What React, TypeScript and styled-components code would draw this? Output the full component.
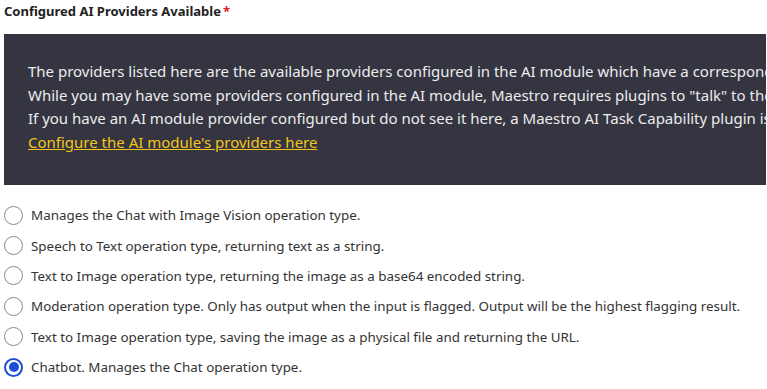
import React from "react";
import styled, { createGlobalStyle } from "styled-components";

const Global = createGlobalStyle`
  html, body { margin: 0; padding: 0; background: #fff; }
  body { font-family: "Noto Sans", "Open Sans", sans-serif; overflow: hidden; }
`;

const Page = styled.div`
  width: 767px;
  height: 389px;
  overflow: hidden;
  padding: 0 1px 0 4px;
  box-sizing: border-box;
`;

const Label = styled.div`
  font-size: 13px;
  font-weight: 700;
  color: #222;
  line-height: 20px;
  padding-top: 1px;
  height: 33px;
`;

const Req = styled.span`
  color: #e0201e;
  margin-left: 2px;
`;

const InfoBox = styled.div`
  background: #353541;
  color: #ececec;
  height: 151px;
  box-sizing: border-box;
  padding: 26px 0 0 24px;
  font-size: 15px;
  line-height: 23.7px;
  white-space: nowrap;
  overflow: hidden;
`;

const Link = styled.a`
  color: #f3c51b;
  text-decoration: underline;
`;

const Options = styled.div`
  display: flex;
  flex-direction: column;
  padding-top: 15px;
`;

const Option = styled.label`
  display: flex;
  align-items: center;
  gap: 8px;
  height: 30.4px;
  font-size: 13.4px;
  color: #333;
  white-space: nowrap;
  cursor: pointer;
`;

const Radio = styled.span<{ $checked?: boolean }>`
  width: 19px;
  height: 19px;
  box-sizing: border-box;
  border-radius: 50%;
  border: ${(p) => (p.$checked ? "2px solid #1a4fd6" : "1px solid #8a8a8a")};
  display: flex;
  align-items: center;
  justify-content: center;
  flex-shrink: 0;
  &::after {
    content: "";
    display: ${(p) => (p.$checked ? "block" : "none")};
    width: 10px;
    height: 10px;
    border-radius: 50%;
    background: #1a4fd6;
  }
`;

const options = [
  "Manages the Chat with Image Vision operation type.",
  "Speech to Text operation type, returning text as a string.",
  "Text to Image operation type, returning the image as a base64 encoded string.",
  "Moderation operation type. Only has output when the input is flagged. Output will be the highest flagging result.",
  "Text to Image operation type, saving the image as a physical file and returning the URL.",
  "Chatbot. Manages the Chat operation type.",
];

export default function App() {
  return (
    <>
      <Global />
      <Page>
        <Label>
          Configured AI Providers Available<Req>*</Req>
        </Label>
        <InfoBox>
          <div>The providers listed here are the available providers configured in the AI module which have a corresponding Maestro AI Task Capability plugin.</div>
          <div>While you may have some providers configured in the AI module, Maestro requires plugins to "talk" to those providers.</div>
          <div>If you have an AI module provider configured but do not see it here, a Maestro AI Task Capability plugin is required.</div>
          <div>
            <Link href="#">Configure the AI module's providers here</Link>
          </div>
        </InfoBox>
        <Options>
          {options.map((o, i) => (
            <Option key={i}>
              <Radio $checked={i === options.length - 1} />
              {o}
            </Option>
          ))}
        </Options>
      </Page>
    </>
  );
}
